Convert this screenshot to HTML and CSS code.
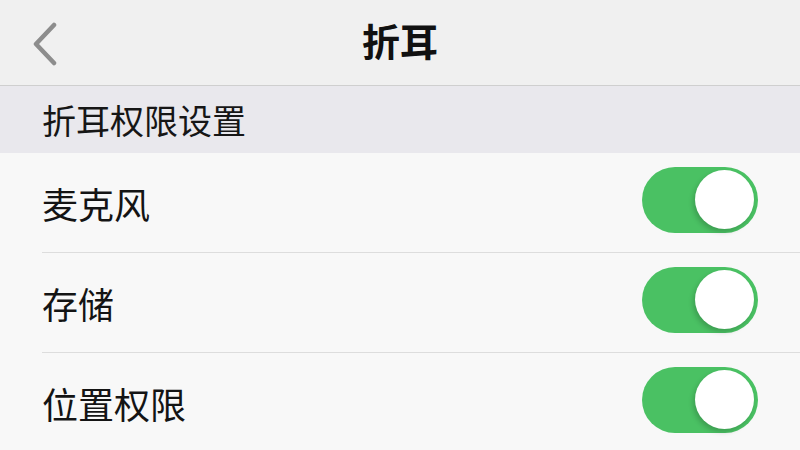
FILE: index.html
```html
<!DOCTYPE html>
<html lang="zh-CN">
<head>
    <meta charset="UTF-8">
    <meta name="viewport" content="width=device-width, initial-scale=1.0">
    <title>折耳</title>
    <link rel="stylesheet" href="styles.css">
</head>
<body>
    <div class="page">
        <div class="navbar">
            <button class="back" aria-label="返回">
                <svg width="28" height="44" viewBox="0 0 28 44">
                    <path d="M23 3 L5 22 L23 41" fill="none" stroke="#8d8d8d" stroke-width="4.5" stroke-linecap="round" stroke-linejoin="round"/>
                </svg>
            </button>
            <h1 class="title">折耳</h1>
        </div>

        <div class="section-header">折耳权限设置</div>

        <ul class="list">
            <li class="row">
                <span class="label">麦克风</span>
                <span class="switch on"><span class="knob"></span></span>
            </li>
            <li class="row">
                <span class="label">存储</span>
                <span class="switch on"><span class="knob"></span></span>
            </li>
            <li class="row">
                <span class="label">位置权限</span>
                <span class="switch on"><span class="knob"></span></span>
            </li>
        </ul>
    </div>
</body>
</html>
```

FILE: styles.css
```css
body {
    margin: 0;
    padding: 0;
    font-family: "Noto Sans CJK SC", "Noto Sans", sans-serif;
    background: #f8f8f8;
    color: #111;
}

.page {
    width: 800px;
    height: 450px;
    overflow: hidden;
}

.navbar {
    height: 85px;
    background: #f0f0f0;
    border-bottom: 1px solid #cfcfcf;
    display: flex;
    align-items: center;
    justify-content: center;
    position: relative;
}

.back {
    position: absolute;
    left: 31px;
    top: 22px;
    padding: 0;
    border: none;
    background: none;
    display: flex;
}

.title {
    margin: 0;
    font-size: 38px;
    font-weight: bold;
    line-height: 1;
    margin-top: -6px;
}

.section-header {
    height: 67px;
    background: #e9e8ed;
    padding-left: 42px;
    display: flex;
    align-items: center;
    font-size: 34px;
    color: #161616;
}

.list {
    list-style: none;
    margin: 0;
    padding: 0 0 0 42px;
    background: #f8f8f8;
}

.row {
    height: 99px;
    display: flex;
    align-items: center;
    justify-content: space-between;
    padding-right: 42px;
    border-bottom: 1px solid #dddddd;
}

.row:last-child {
    border-bottom: none;
}

.label {
    font-size: 36px;
    color: #141414;
    margin-top: 0;
}

.switch {
    width: 116px;
    height: 66px;
    border-radius: 33px;
    background: #e5e5e5;
    display: flex;
    align-items: center;
    padding: 0 4px;
    box-sizing: border-box;
    margin-bottom: 6px;
}

.switch.on {
    background: #4ac163;
    justify-content: flex-end;
}

.knob {
    width: 59px;
    height: 59px;
    border-radius: 50%;
    background: #fff;
    box-shadow: -2px 3px 5px rgba(0, 0, 0, 0.18);
}
```
